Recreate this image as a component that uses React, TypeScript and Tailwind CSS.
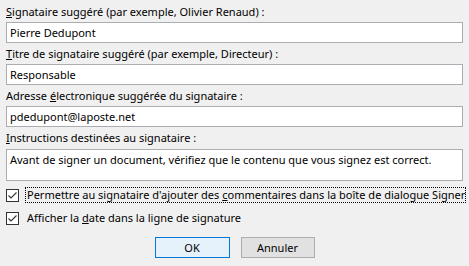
import React from 'react';

const font = { fontFamily: '"Segoe UI", "Noto Sans", "Open Sans", sans-serif' };

const Field: React.FC<{ value: string }> = ({ value }) => (
  <div className="h-[21px] border border-[#abadb3] bg-white pl-[3px] leading-[19px] text-black whitespace-nowrap overflow-hidden">
    {value}
  </div>
);

const Check: React.FC = () => (
  <div className="w-[13px] h-[13px] border border-[#333333] bg-white flex items-center justify-center shrink-0">
    <svg width="11" height="11" viewBox="0 0 11 11" fill="none">
      <path d="M1.5 5.5 L4 8 L9.5 2.5" stroke="#333333" strokeWidth="1.1" />
    </svg>
  </div>
);

const App: React.FC = () => {
  return (
    <div
      className="w-[469px] h-[266px] bg-[#f0f0f0] text-black text-[11px] leading-[16px] px-[6px] pt-[4px] overflow-hidden"
      style={font}
    >
      {/* Signataire */}
      <div className="h-[16px] mb-[2px] whitespace-nowrap">
        <span className="underline">S</span>ignataire suggéré (par exemple, Olivier Renaud) :
      </div>
      <Field value="Pierre Dedupont" />

      <div className="h-[16px] mt-[3px] mb-[2px] whitespace-nowrap">
        <span className="underline">T</span>itre de signataire suggéré (par exemple, Directeur) :
      </div>
      <Field value="Responsable" />

      <div className="h-[16px] mt-[3px] mb-[2px] whitespace-nowrap">
        Adresse <span className="underline">é</span>lectronique suggérée du signataire :
      </div>
      <Field value="pdedupont@laposte.net" />

      <div className="h-[16px] mt-[3px] mb-[3px] whitespace-nowrap">
        <span className="underline">I</span>nstructions destinées au signataire :
      </div>
      <div className="h-[32px] border border-[#abadb3] bg-white pl-[3px] pt-[2px] whitespace-nowrap overflow-hidden">
        Avant de signer un document, vérifiez que le contenu que vous signez est correct.
      </div>

      {/* Options */}
      <div className="flex items-center h-[16px] mt-[6px]">
        <Check />
        <div className="ml-[6px] h-[16px] flex-1 border border-dotted border-black pl-[1px] leading-[14px] whitespace-nowrap">
          <span>
            Permettre au signataire d'ajouter des <span className="underline">c</span>ommentaires dans la boîte de dialogue Signer
          </span>
        </div>
      </div>
      <div className="flex items-center h-[16px] mt-[7px]">
        <Check />
        <div className="ml-[8px] whitespace-nowrap">
          Afficher la <span className="underline">d</span>ate dans la ligne de signature
        </div>
      </div>

      {/* Buttons */}
      <div className="flex justify-center gap-[11px] mt-[11px]">
        <button className="w-[75px] h-[21px] bg-[#e5f1fb] border border-[#0078d7] text-[11px] leading-none">
          OK
        </button>
        <button className="w-[74px] h-[21px] bg-[#e1e1e1] border border-[#adadad] text-[11px] leading-none">
          Annuler
        </button>
      </div>
    </div>
  );
};

export default App;
